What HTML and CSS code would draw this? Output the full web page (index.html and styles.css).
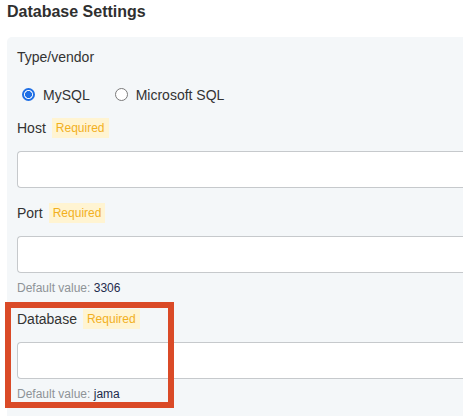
FILE: index.html
```html
<!DOCTYPE html>
<html lang="en">
<head>
<meta charset="utf-8">
<title>Database Settings</title>
<link rel="stylesheet" href="styles.css">
</head>
<body>
<div class="page">
  <h1 class="title">Database Settings</h1>
  <section class="panel">
    <div class="group-label">Type/vendor</div>
    <div class="radios">
      <label class="radio"><span class="dot dot-on"></span><span class="radio-text">MySQL</span></label>
      <label class="radio"><span class="dot"></span><span class="radio-text">Microsoft SQL</span></label>
    </div>
    <div class="field field-first">
      <div class="label-row"><span class="label">Host</span><span class="badge">Required</span></div>
      <div class="input"></div>
    </div>
    <div class="field field-after-input">
      <div class="label-row"><span class="label">Port</span><span class="badge">Required</span></div>
      <div class="input"></div>
      <div class="hint">Default value: <span class="hint-value">3306</span></div>
    </div>
    <div class="field">
      <div class="label-row"><span class="label">Database</span><span class="badge">Required</span></div>
      <div class="input"></div>
      <div class="hint">Default value: <span class="hint-value">jama</span></div>
    </div>
  </section>
  <div class="highlight"></div>
</div>
</body>
</html>
```

FILE: styles.css
```css
html, body {
  margin: 0;
  padding: 0;
  overflow: hidden;
  background: #ffffff;
}
body {
  font-family: "Liberation Sans", Arial, Helvetica, sans-serif;
  color: #333333;
  width: 463px;
  height: 416px;
}
.page {
  position: relative;
  padding-left: 7px;
  height: 416px;
  box-sizing: border-box;
}
.title {
  margin: 0;
  padding-top: 2px;
  font-size: 16px;
  line-height: 20px;
  font-weight: bold;
  color: #2f2f2f;
}
.panel {
  margin-top: 15px;
  width: 456px;
  height: 379px;
  box-sizing: border-box;
  padding: 10px 0 0 10px;
  background: #f4f7f9;
  border-radius: 5px 0 0 0;
}
.group-label {
  font-size: 14px;
  line-height: 20px;
  color: #333333;
}
.radios {
  margin-top: 18px;
  display: flex;
  align-items: center;
  height: 20px;
  padding-left: 5px;
  gap: 25px;
}
.radio {
  display: flex;
  align-items: center;
  gap: 8px;
  font-size: 14px;
  line-height: 20px;
  color: #333333;
}
.dot {
  width: 13px;
  height: 13px;
  box-sizing: border-box;
  border-radius: 50%;
  border: 1px solid #7a7a7a;
  background: #ffffff;
  margin-top: -1px;
}
.dot-on {
  border: 2px solid #1f6fe5;
  background: radial-gradient(circle, #1f6fe5 0 3.2px, #ffffff 3.8px);
}
.field {
  margin-top: 13px;
}
.field-after-input {
  margin-top: 15px;
}
.label-row {
  display: flex;
  align-items: center;
  height: 20px;
  gap: 6px;
}
.label {
  font-size: 14px;
  line-height: 20px;
  color: #333333;
}
.badge {
  font-size: 12px;
  line-height: 20px;
  height: 20px;
  padding: 0 4px;
  background: #fff4d2;
  color: #f2b01e;
}
.input {
  margin-top: 13px;
  width: 446px;
  height: 37px;
  box-sizing: border-box;
  background: #ffffff;
  border: 1px solid #c6c9cc;
  border-right: none;
  border-radius: 4px 0 0 4px;
}
.hint {
  margin-top: 7px;
  font-size: 12px;
  line-height: 16px;
  color: #8e9397;
}
.hint-value {
  color: #1d2b4c;
}
.highlight {
  position: absolute;
  left: 5px;
  top: 302px;
  width: 169px;
  height: 106px;
  box-sizing: border-box;
  border: 6px solid #da4a27;
}
```
